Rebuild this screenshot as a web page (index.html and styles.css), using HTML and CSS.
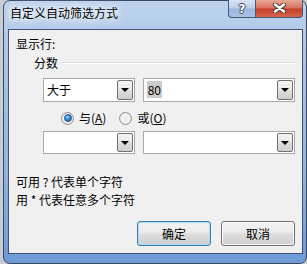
FILE: index.html
```html
<!DOCTYPE html>
<html>
<head lang="zh-CN">
    <meta charset="UTF-8">
    <title>自定义自动筛选方式</title>
    <link rel="stylesheet" href="styles.css">
</head>
<body>
<div class="window">
    <div class="titlebar">
        <span class="caption">自定义自动筛选方式</span>
        <div class="caption-btns">
            <span class="cbtn help">?</span>
            <span class="cbtn close">
                <svg width="13" height="10" viewBox="0 0 13 10">
                    <path d="M2 1.5 L11 8.5 M11 1.5 L2 8.5" stroke="#3a3a3a" stroke-width="4.2" stroke-linecap="round"/>
                    <path d="M2 1.5 L11 8.5 M11 1.5 L2 8.5" stroke="#fff" stroke-width="2.4" stroke-linecap="round"/>
                </svg>
            </span>
        </div>
    </div>
    <div class="panel">
        <div class="label">显示行:</div>
        <div class="group">
            <span class="group-title">分数</span>
            <i class="rule"></i>
        </div>
        <div class="row first">
            <div class="combo op"><span class="val">大于</span><span class="drop"></span></div>
            <div class="combo num"><span class="val"><span class="sel">80</span></span><span class="drop"></span></div>
        </div>
        <div class="radios">
            <span class="radio checked"></span><span class="rlabel">与(<u>A</u>)</span>
            <span class="radio"></span><span class="rlabel">或(<u>O</u>)</span>
        </div>
        <div class="row second">
            <div class="combo op"><span class="val"></span><span class="drop"></span></div>
            <div class="combo num"><span class="val"></span><span class="drop"></span></div>
        </div>
        <div class="hint">
            可用 ? 代表单个字符<br>
            用 * 代表任意多个字符
        </div>
        <div class="buttons">
            <button class="btn default" type="button">确定</button>
            <button class="btn" type="button">取消</button>
        </div>
    </div>
</div>
</body>
</html>
```

FILE: styles.css
```css
*{
    margin: 0;
    padding: 0;
    box-sizing: border-box;
}
body{
    width: 307px;
    height: 264px;
    overflow: hidden;
    background-color: #c9ccd2;
    font-family: "Noto Sans CJK SC", "Microsoft YaHei", sans-serif;
    font-size: 12px;
    color: #000;
}
.window{
    margin-left: 3px;
    width: 304px;
    height: 264px;
    border: 1px solid #3b4a63;
    border-radius: 7px;
    background: linear-gradient(180deg, #bdd2ec 0%, #a9c3e6 25%, #93b3de 65%, #6d99d6 100%);
}
.titlebar{
    display: flex;
    justify-content: space-between;
    align-items: flex-start;
    height: 28px;
    padding: 0 3px 0 6px;
}
.caption{
    line-height: 16px;
    padding-top: 4px;
    text-shadow: 0 0 6px #fff, 0 0 10px #fff, 0 0 14px #fff;
}
.caption-btns{
    display: flex;
    height: 18px;
    margin-top: -1px;
}
.cbtn{
    display: flex;
    align-items: center;
    justify-content: center;
    height: 18px;
    border: 1px solid #47597a;
    border-top: none;
}
.help{
    width: 27px;
    border-right: none;
    border-radius: 0 0 0 4px;
    background: linear-gradient(180deg, #d7e3f3 0%, #bccfe9 45%, #9fb7db 55%, #a9c2e4 100%);
    color: #fff;
    font-family: "DejaVu Sans", sans-serif;
    font-weight: bold;
    font-size: 12px;
    line-height: 16px;
    text-shadow: 1px 0 0 #3c4a60, -1px 0 0 #3c4a60, 0 1px 0 #3c4a60, 0 -1px 0 #3c4a60;
}
.close{
    width: 48px;
    border-radius: 0 0 4px 0;
    background: linear-gradient(180deg, #e8a898 0%, #d9735c 45%, #c5412a 55%, #d3644a 100%);
}
.close svg{
    display: block;
    margin-top: -1px;
}
.panel{
    margin: 0 3px 0 4px;
    height: 225px;
    border: 1px solid #3e5477;
    background-color: #f0f0f0;
    padding: 6px 7px 0 7px;
}
.label{
    line-height: 16px;
}
.group{
    display: flex;
    align-items: center;
    margin-top: 3px;
    line-height: 16px;
}
.group-title{
    margin-left: 18px;
}
.rule{
    flex: 1;
    height: 2px;
    margin-left: 4px;
    margin-right: -1px;
    border-top: 1px solid #d5dfe5;
    border-bottom: 1px solid #fff;
}
.row{
    display: flex;
    gap: 8px;
    padding-left: 27px;
}
.row.first{
    margin-top: 7px;
}
.row.second{
    margin-top: 5px;
}
.combo{
    display: flex;
    align-items: center;
    height: 24px;
    padding: 1px;
    border: 1px solid #a9a9a9;
    background-color: #fff;
}
.row.second .combo{
    height: 23px;
}
.combo.op{
    width: 92px;
}
.combo.num{
    width: 153px;
}
.val{
    flex: 1;
    padding-left: 2px;
    line-height: 16px;
}
.sel{
    background-color: #cccccc;
    padding: 0 1px;
}
.drop{
    position: relative;
    width: 16px;
    height: 100%;
    border: 1px solid #707070;
    border-radius: 2px;
    background: linear-gradient(180deg, #f3f3f3 0%, #ebebeb 45%, #dddddd 55%, #cfcfcf 100%);
}
.drop:after{
    content: "";
    position: absolute;
    left: 3px;
    top: 7px;
    border-left: 4px solid transparent;
    border-right: 4px solid transparent;
    border-top: 4px solid #000;
}
.radios{
    display: flex;
    align-items: center;
    height: 16px;
    margin-top: 8px;
    padding-left: 45px;
}
.radio{
    width: 13px;
    height: 13px;
    border-radius: 50%;
    border: 1px solid #8e8f8f;
    background: radial-gradient(circle at 50% 50%, #e6e6e6 0%, #f4f4f4 50%, #d6d6d6 100%);
    display: flex;
    align-items: center;
    justify-content: center;
}
.radio.checked:after{
    content: "";
    width: 6px;
    height: 6px;
    border-radius: 50%;
    border: 1px solid #18518c;
    background: radial-gradient(circle at 40% 35%, #8fd0ff 0%, #2d86d8 50%, #1453a0 100%);
}
.rlabel{
    margin-left: 5px;
    margin-right: 13px;
    line-height: 16px;
}
.rlabel u{
    text-decoration-thickness: 1px;
    text-underline-offset: 1px;
}
.hint{
    margin-top: 19px;
    line-height: 18px;
}
.buttons{
    display: flex;
    justify-content: flex-end;
    gap: 10px;
    margin-top: 12px;
}
.btn{
    width: 74px;
    height: 25px;
    border: 1px solid #707070;
    border-radius: 3px;
    background: linear-gradient(180deg, #f2f2f2 0%, #ebebeb 45%, #dddddd 52%, #cfcfcf 100%);
    box-shadow: inset 0 0 0 1px #fbfbfb;
    font-family: "Noto Sans CJK SC", sans-serif;
    font-size: 12px;
    color: #000;
}
.btn.default{
    border-color: #3c7fb1;
    box-shadow: inset 0 0 0 1px #a9dcf6;
}
```
